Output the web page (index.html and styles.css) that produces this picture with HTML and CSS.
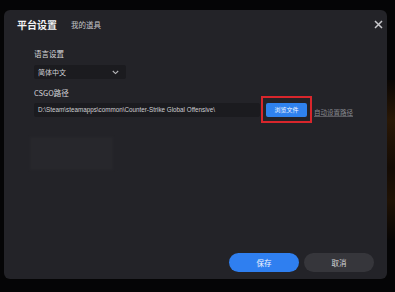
FILE: index.html
```html
<!DOCTYPE html>
<html lang="zh-CN">
<head>
  <meta charset="UTF-8" />
  <title>平台设置</title>
  <link rel="stylesheet" href="styles.css">
</head>
<body>
  <div class="backdrop">
    <div class="glow"></div>
    <div class="dialog">
      <div class="header">
        <span class="tab active">平台设置</span>
        <span class="tab">我的道具</span>
        <span class="close">
          <svg width="9" height="9" viewBox="0 0 9 9"><path d="M1 1L8 8M8 1L1 8" stroke="#c8c8cc" stroke-width="1.5"/></svg>
        </span>
      </div>

      <div class="content">
        <div class="label">语言设置</div>
        <div class="select">
          <span>简体中文</span>
          <svg width="7" height="5" viewBox="0 0 7 5"><path d="M0.8 1L3.5 3.6L6.2 1" stroke="#b8b8bc" stroke-width="1.1" fill="none"/></svg>
        </div>

        <div class="label path-label">CSGO路径</div>
        <div class="path-row">
          <div class="path-input">D:\Steam\steamapps\common\Counter-Strike Global Offensive\</div>
          <div class="highlight">
            <button class="browse">浏览文件</button>
          </div>
          <a class="auto-link">自动设置路径</a>
        </div>

        <div class="ghost"></div>
      </div>

      <div class="footer">
        <button class="btn primary">保存</button>
        <button class="btn secondary">取消</button>
      </div>
    </div>
  </div>
</body>
</html>
```

FILE: styles.css
```css
body {
  margin: 0;
  background-color: #050506;
  font-family: "Noto Sans CJK SC", "Noto Sans", sans-serif;
  color: #e6e6e8;
  overflow: hidden;
}
.backdrop {
  position: relative;
  width: 395px;
  height: 292px;
  padding: 10px 0 0 4px;
  box-sizing: border-box;
}
.glow {
  position: absolute;
  right: 0;
  top: 80px;
  width: 8px;
  height: 160px;
  background: linear-gradient(180deg, #0a0604, #2a1806 25%, #140b04 55%, #201204 75%, #070504);
}
.dialog {
  position: relative;
  width: 383px;
  height: 269px;
  background-color: #232328;
  border-radius: 6px;
  display: flex;
  flex-direction: column;
}
.header {
  display: flex;
  align-items: center;
  padding: 0 4px 0 13px;
  height: 28px;
}
.tab {
  font-size: 7.5px;
  color: #c4c4c8;
  margin-top: 1px;
}
.tab.active {
  font-size: 10px;
  font-weight: 700;
  color: #f2f2f4;
  margin-right: 14px;
  margin-top: 0;
}
.close {
  margin-left: auto;
  display: flex;
  width: 9px;
  height: 9px;
}
.content {
  flex: 1;
  padding: 10px 0 0 30px;
}
.label {
  font-size: 7.5px;
  color: #d6d6da;
  line-height: 12px;
}
.select {
  width: 92px;
  height: 14px;
  margin-top: 5px;
  background-color: #1b1b1f;
  border-radius: 2px;
  display: flex;
  align-items: center;
  justify-content: space-between;
  padding: 0 7px 0 4px;
  box-sizing: border-box;
  font-size: 7px;
  color: #d0d0d4;
}
.path-label {
  margin-top: 8px;
}
.path-row {
  display: flex;
  align-items: center;
  margin-top: -3px;
}
.path-input {
  width: 226px;
  height: 14px;
  background-color: #1b1b1f;
  border-radius: 2px;
  font-family: "Liberation Sans", sans-serif;
  font-size: 6.3px;
  line-height: 14px;
  padding-left: 4px;
  box-sizing: border-box;
  color: #cfcfd3;
  white-space: nowrap;
  overflow: hidden;
}
.highlight {
  width: 51px;
  height: 27px;
  border: 2px solid #d8262c;
  box-sizing: border-box;
  display: flex;
  align-items: center;
  justify-content: center;
  margin-left: 1px;
}
.browse {
  width: 41px;
  height: 14px;
  border: none;
  border-radius: 2px;
  background-color: #2f82ee;
  color: #f4f7ff;
  font-family: inherit;
  font-size: 6px;
  padding: 0;
}
.auto-link {
  font-size: 6.5px;
  color: #8a8a90;
  margin-left: 2px;
  margin-top: 4px;
  text-decoration: underline;
  text-decoration-color: #5a5a60;
}
.ghost {
  width: 83px;
  height: 33px;
  margin: 14px 0 0 -4px;
  background-color: #27272c;
  filter: blur(1px);
}
.footer {
  display: flex;
  justify-content: flex-end;
  gap: 5px;
  padding: 0 13px 7px 0;
}
.btn {
  width: 70px;
  height: 19px;
  border: none;
  border-radius: 10px;
  font-family: inherit;
  font-size: 7.5px;
  padding: 0;
}
.primary {
  background-color: #2f7ff0;
  color: #f2f6ff;
}
.secondary {
  background-color: #36363b;
  color: #d4d4d8;
}
```
